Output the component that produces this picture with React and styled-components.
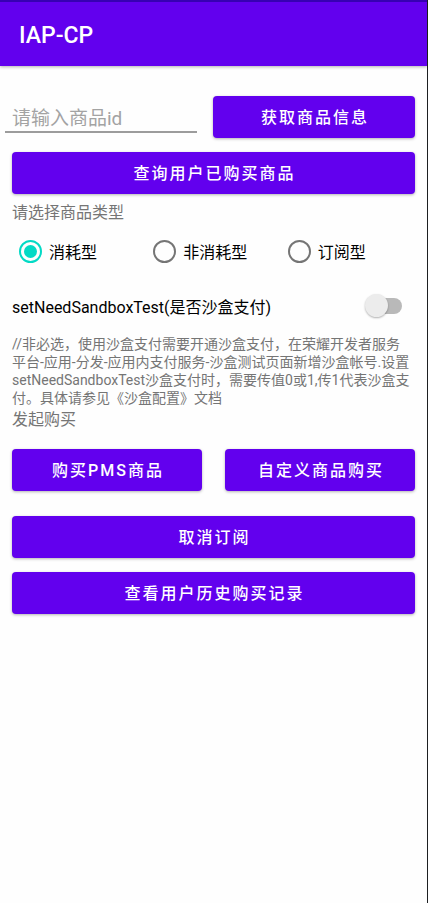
import React, { useState } from "react";
import styled, { createGlobalStyle } from "styled-components";

const GlobalStyle = createGlobalStyle`
  *, *::before, *::after { box-sizing: border-box; }
  body {
    margin: 0;
    background: #fefefe;
    font-family: Roboto, "Noto Sans CJK SC", sans-serif;
  }
`;

const Screen = styled.div`
  min-height: 100vh;
  border-right: 1px solid #1d1f21;
`;

const AppBar = styled.header`
  display: flex;
  align-items: center;
  height: 66px;
  padding: 4px 19px 0;
  border-top: 2px solid #3700b3;
  background: #6200ee;
  box-shadow: 0 1px 3px rgba(0, 0, 0, 0.3);
`;

const Title = styled.h1`
  margin: 0;
  color: #fff;
  font-size: 23px;
  line-height: 28px;
  font-weight: 500;
`;

const Content = styled.main`
  display: flex;
  flex-direction: column;
  padding: 30px 12px 24px;
`;

const SearchRow = styled.div`
  display: grid;
  grid-template-columns: 192px 1fr;
  column-gap: 16px;
  margin: 0 0 14px -7px;
`;

const ProductInput = styled.input`
  width: 100%;
  height: 37px;
  padding: 9px 7px 0;
  border: 0;
  border-bottom: 2px solid #9c9c9c;
  border-radius: 0;
  outline: 0;
  background: transparent;
  color: #212121;
  font: 400 19px/24px Roboto, "Noto Sans CJK SC", sans-serif;

  &::placeholder { color: #a3a3a3; opacity: 1; }
  &:focus { border-bottom-color: #03dac5; }
`;

const Button = styled.button`
  height: 42px;
  padding: 2px 12px 0 14px;
  border: 0;
  border-radius: 4px;
  background: #6200ee;
  box-shadow: 0 1px 3px rgba(0, 0, 0, 0.3);
  color: #fff;
  font: 500 16px/24px Roboto, "Noto Sans CJK SC", sans-serif;
  letter-spacing: 2px;
  cursor: pointer;
`;

const Label = styled.h2`
  margin: 0;
  color: #757575;
  font-size: 16px;
  line-height: 26px;
  font-weight: 400;
`;

const TypeLabel = styled(Label)`
  margin-top: 6px;
`;

const RadioGroup = styled.div`
  display: grid;
  grid-template-columns: repeat(3, 1fr);
  height: 50px;
`;

const RadioLabel = styled.label`
  display: flex;
  align-items: center;
  gap: 7px;
  padding-left: 7px;
  color: #000;
  font-size: 16px;
  white-space: nowrap;
`;

const Radio = styled.input`
  appearance: none;
  display: grid;
  place-items: center;
  flex: none;
  width: 23px;
  height: 23px;
  margin: 0;
  border: 2px solid #757575;
  border-radius: 50%;

  &:checked { border-color: #03dac5; }
  &:checked::before {
    content: "";
    width: 13px;
    height: 13px;
    border-radius: 50%;
    background: #03dac5;
  }
`;

const SwitchRow = styled.label`
  display: flex;
  align-items: center;
  justify-content: space-between;
  height: 59px;
  padding-right: 13px;
  color: #000;
  font-size: 16px;
`;

const Switch = styled.input`
  appearance: none;
  display: flex;
  align-items: center;
  width: 33px;
  height: 16px;
  margin: 0;
  border-radius: 8px;
  background: #b9b9b9;

  &::before {
    content: "";
    flex: none;
    width: 23px;
    height: 23px;
    margin-left: -4px;
    border-radius: 50%;
    background: #ececec;
    box-shadow: 0 1px 2px rgba(0, 0, 0, 0.3);
  }
  &:checked { justify-content: flex-end; background: #81ece2; }
  &:checked::before { background: #03dac5; }
`;

const Note = styled.p`
  margin: 0;
  color: #757575;
  font-size: 14px;
  line-height: 18px;
`;

const PurchaseRow = styled.div`
  display: grid;
  grid-template-columns: 1fr 1fr;
  gap: 23px;
  margin: 16px 0 25px;
`;

const ButtonStack = styled.div`
  display: grid;
  gap: 14px;
`;

const productTypes = ["消耗型", "非消耗型", "订阅型"];

export default function App() {
  const [type, setType] = useState(productTypes[0]);
  const [sandbox, setSandbox] = useState(false);

  return (
    <>
      <GlobalStyle />
      <Screen>
        <AppBar>
          <Title>IAP-CP</Title>
        </AppBar>
        <Content>
          <SearchRow>
            <ProductInput type="text" placeholder="请输入商品id" aria-label="请输入商品id" />
            <Button type="button">获取商品信息</Button>
          </SearchRow>
          <Button type="button">查询用户已购买商品</Button>
          <TypeLabel id="type-label">请选择商品类型</TypeLabel>
          <RadioGroup role="radiogroup" aria-labelledby="type-label">
            {productTypes.map((name) => (
              <RadioLabel key={name}>
                <Radio
                  type="radio"
                  name="product-type"
                  checked={type === name}
                  onChange={() => setType(name)}
                />
                {name}
              </RadioLabel>
            ))}
          </RadioGroup>
          <SwitchRow>
            setNeedSandboxTest(是否沙盒支付)
            <Switch
              type="checkbox"
              role="switch"
              checked={sandbox}
              onChange={(event) => setSandbox(event.target.checked)}
            />
          </SwitchRow>
          <Note>
            //非必选，使用沙盒支付需要开通沙盒支付，在荣耀开发者服务
            <br />
            平台-应用-分发-应用内支付服务-沙盒测试页面新增沙盒帐号.设置
            <br />
            setNeedSandboxTest沙盒支付时，需要传值0或1,传1代表沙盒支
            <br />
            付。具体请参见《沙盒配置》文档
          </Note>
          <Label>发起购买</Label>
          <PurchaseRow>
            <Button type="button">购买PMS商品</Button>
            <Button type="button">自定义商品购买</Button>
          </PurchaseRow>
          <ButtonStack>
            <Button type="button">取消订阅</Button>
            <Button type="button">查看用户历史购买记录</Button>
          </ButtonStack>
        </Content>
      </Screen>
    </>
  );
}
